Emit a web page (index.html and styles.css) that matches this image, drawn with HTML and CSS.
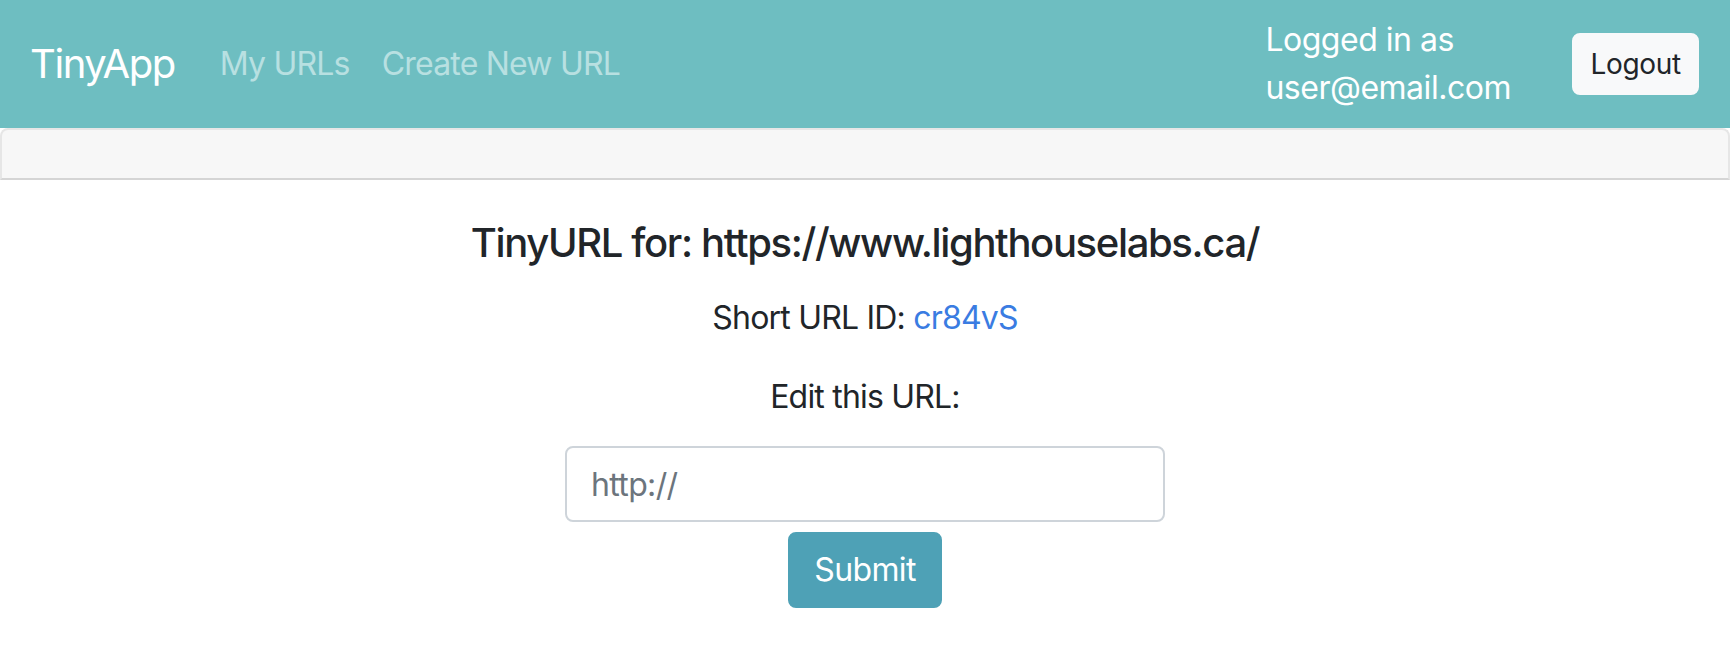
FILE: index.html
```html
<!DOCTYPE html>
<html lang="en">
<head>
<meta charset="utf-8">
<title>TinyApp</title>
<link rel="stylesheet" href="styles.css">
</head>
<body>
<nav class="navbar">
  <div class="nav-left">
    <a class="brand" href="#">TinyApp</a>
    <a class="nav-link" href="#">My URLs</a>
    <a class="nav-link" href="#">Create New URL</a>
  </div>
  <div class="nav-right">
    <span class="user-text">Logged in as user@email.com</span>
    <button class="btn-logout" type="button">Logout</button>
  </div>
</nav>
<div class="band"></div>
<main class="content">
  <h5 class="title">TinyURL for: https://www.lighthouselabs.ca/</h5>
  <p class="short">Short URL ID: <a href="#" class="short-link">cr84vS</a></p>
  <form class="edit-form">
    <label class="edit-label" for="url">Edit this URL:</label>
    <input class="url-input" id="url" type="text" placeholder="http://">
    <button class="btn-submit" type="button">Submit</button>
  </form>
</main>
</body>
</html>
```
FILE: styles.css
```css
* { box-sizing: border-box; }
body {
  margin: 0;
  font-family: Inter, "Noto Sans", "Liberation Sans", sans-serif;
  font-size: 32px;
  line-height: 48px;
  letter-spacing: -0.025em;
  color: #212529;
  background: #fff;
}
.navbar {
  height: 128px;
  background: #6ebec1;
  padding: 16px 31px 16px 30px;
  display: flex;
  align-items: center;
  justify-content: space-between;
}
.nav-left { display: flex; align-items: center; }
.brand {
  color: #fff;
  font-size: 40px;
  text-decoration: none;
  margin-right: 29px;
  letter-spacing: -0.036em;
}
.nav-link {
  color: #b8e0e1;
  text-decoration: none;
  padding: 0 16px;
}
.nav-right { display: flex; align-items: center; }
.user-text {
  color: #fff;
  width: 307px;
  letter-spacing: -0.015em;
}
.btn-logout {
  font-family: inherit;
  font-size: 28px;
  line-height: 42px;
  letter-spacing: -0.01em;
  height: 62px;
  padding: 8px 16px;
  background: #f8f9fa;
  color: #212529;
  border: 2px solid #f8f9fa;
  border-radius: 8px;
}
.band {
  height: 52px;
  background: #f7f7f7;
  border: 2px solid #e6e6e6;
  border-bottom-color: #d5d5d5;
  border-radius: 8px 8px 0 0;
}
.content {
  text-align: center;
  padding-top: 39px;
}
.title {
  margin: 0 0 27px;
  font-size: 40px;
  font-weight: 500;
  line-height: 48px;
  letter-spacing: -0.034em;
}
.short { margin: 0 0 31px; }
.short-link { color: #3a7ce2; text-decoration: none; }
.edit-form {
  display: flex;
  flex-direction: column;
  align-items: center;
}
.edit-label { margin-bottom: 25px; }
.url-input {
  width: 600px;
  height: 76px;
  padding: 12px 24px;
  font-family: inherit;
  font-size: 32px;
  letter-spacing: -0.02em;
  color: #495057;
  border: 2px solid #ced4da;
  border-radius: 8px;
  outline: none;
}
.url-input::placeholder { color: #6c757d; }
.btn-submit {
  margin-top: 10px;
  font-family: inherit;
  font-size: 32px;
  line-height: 48px;
  letter-spacing: -0.02em;
  height: 76px;
  padding: 12px 24px;
  color: #fff;
  background: #4ea1b6;
  border: 2px solid #4ea1b6;
  border-radius: 8px;
}
```
